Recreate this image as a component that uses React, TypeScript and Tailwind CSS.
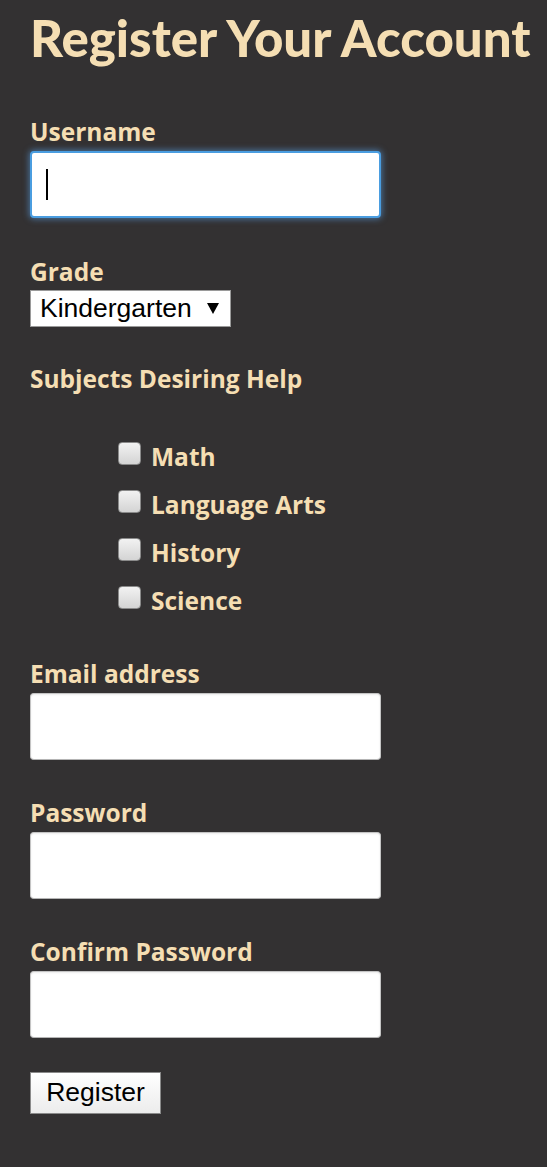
import React from "react";

const SUBJECTS = ["Math", "Language Arts", "History", "Science"] as const;

const LABEL = "block text-[24.5px] font-bold leading-[28px] text-[#f5deb3]";
const INPUT =
  "block h-[67px] w-[351px] rounded-[4px] border border-[#c4c4c4] border-b-[#b4b4b4] bg-white px-3 text-[24px] shadow-[inset_0_1px_2px_rgba(0,0,0,0.08)] outline-none";

function Field({ id, label, type = "text", className = "" }: { id: string; label: string; type?: string; className?: string }) {
  return (
    <div className={className}>
      <label htmlFor={id} className={LABEL}>
        {label}
      </label>
      <input id={id} type={type} className={`mt-[5px] ${INPUT}`} />
    </div>
  );
}

export default function App() {
  return (
    <div
      className="min-h-[1167px] bg-[#333132] px-[30px] pt-[8px]"
      style={{ fontFamily: "'Open Sans', Lato, sans-serif" }}
    >
      <h1
        className="whitespace-nowrap text-[51px] font-black leading-[60px] text-[#f5deb3]"
        style={{ fontFamily: "Lato, 'Open Sans', sans-serif" }}
      >
        Register Your Account
      </h1>

      <form className="mt-[50px]" onSubmit={(e) => e.preventDefault()}>
        {/* Username — shown focused */}
        <div>
          <label htmlFor="username" className={LABEL}>
            Username
          </label>
          <div className="relative mt-[5px] w-[351px]">
            <input
              id="username"
              type="text"
              className="block h-[67px] w-[351px] rounded-[4px] border-2 border-[#4a9de0] bg-white px-3 text-[24px] shadow-[0_0_6px_1px_rgba(90,160,230,0.6)] outline-none"
            />
            <span className="pointer-events-none absolute left-[16px] top-[18px] h-[31px] w-[1.5px] bg-black" />
          </div>
        </div>

        {/* Grade */}
        <div className="mt-[40px]">
          <label htmlFor="grade" className={LABEL}>
            Grade
          </label>
          <div className="relative mt-[4px] inline-block">
            <select
              id="grade"
              className="block h-[37px] w-[201px] appearance-none border border-[#9a9a9a] bg-white pl-[9px] pr-8 text-[26.5px] leading-[35px] text-black outline-none"
              style={{ fontFamily: "'Liberation Sans', Arial, sans-serif" }}
            >
              <option>Kindergarten</option>
              <option>1st Grade</option>
              <option>2nd Grade</option>
              <option>3rd Grade</option>
            </select>
            <svg
              aria-hidden
              className="pointer-events-none absolute right-[12px] top-[13px]"
              width="12"
              height="11"
              viewBox="0 0 12 11"
            >
              <polygon points="0,0 12,0 6,11" fill="#000" />
            </svg>
          </div>
        </div>

        {/* Subjects */}
        <div className="mt-[38px]">
          <p className={LABEL}>Subjects Desiring Help</p>
          <ul className="mt-[50px] flex flex-col gap-[20px] pl-[88px]">
            {SUBJECTS.map((s) => (
              <li key={s} className="flex items-start gap-[10px]">
                <input
                  type="checkbox"
                  id={s}
                  className="mt-[-1px] h-[23px] w-[23px] appearance-none rounded-[4px] border border-[#8a8a8a] bg-gradient-to-b from-[#f2f2f2] to-[#d4d4d4]"
                />
                <label htmlFor={s} className={LABEL}>
                  {s}
                </label>
              </li>
            ))}
          </ul>
        </div>

        <Field id="email" label="Email address" type="email" className="mt-[45px]" />
        <Field id="password" label="Password" type="password" className="mt-[39px]" />
        <Field id="confirm" label="Confirm Password" type="password" className="mt-[39px]" />

        <button
          type="submit"
          className="mt-[34px] h-[42px] w-[131px] border border-[#8a8a8a] bg-gradient-to-b from-white to-[#ececec] text-[26.5px] text-black"
          style={{ fontFamily: "'Liberation Sans', Arial, sans-serif" }}
        >
          Register
        </button>
      </form>
    </div>
  );
}
